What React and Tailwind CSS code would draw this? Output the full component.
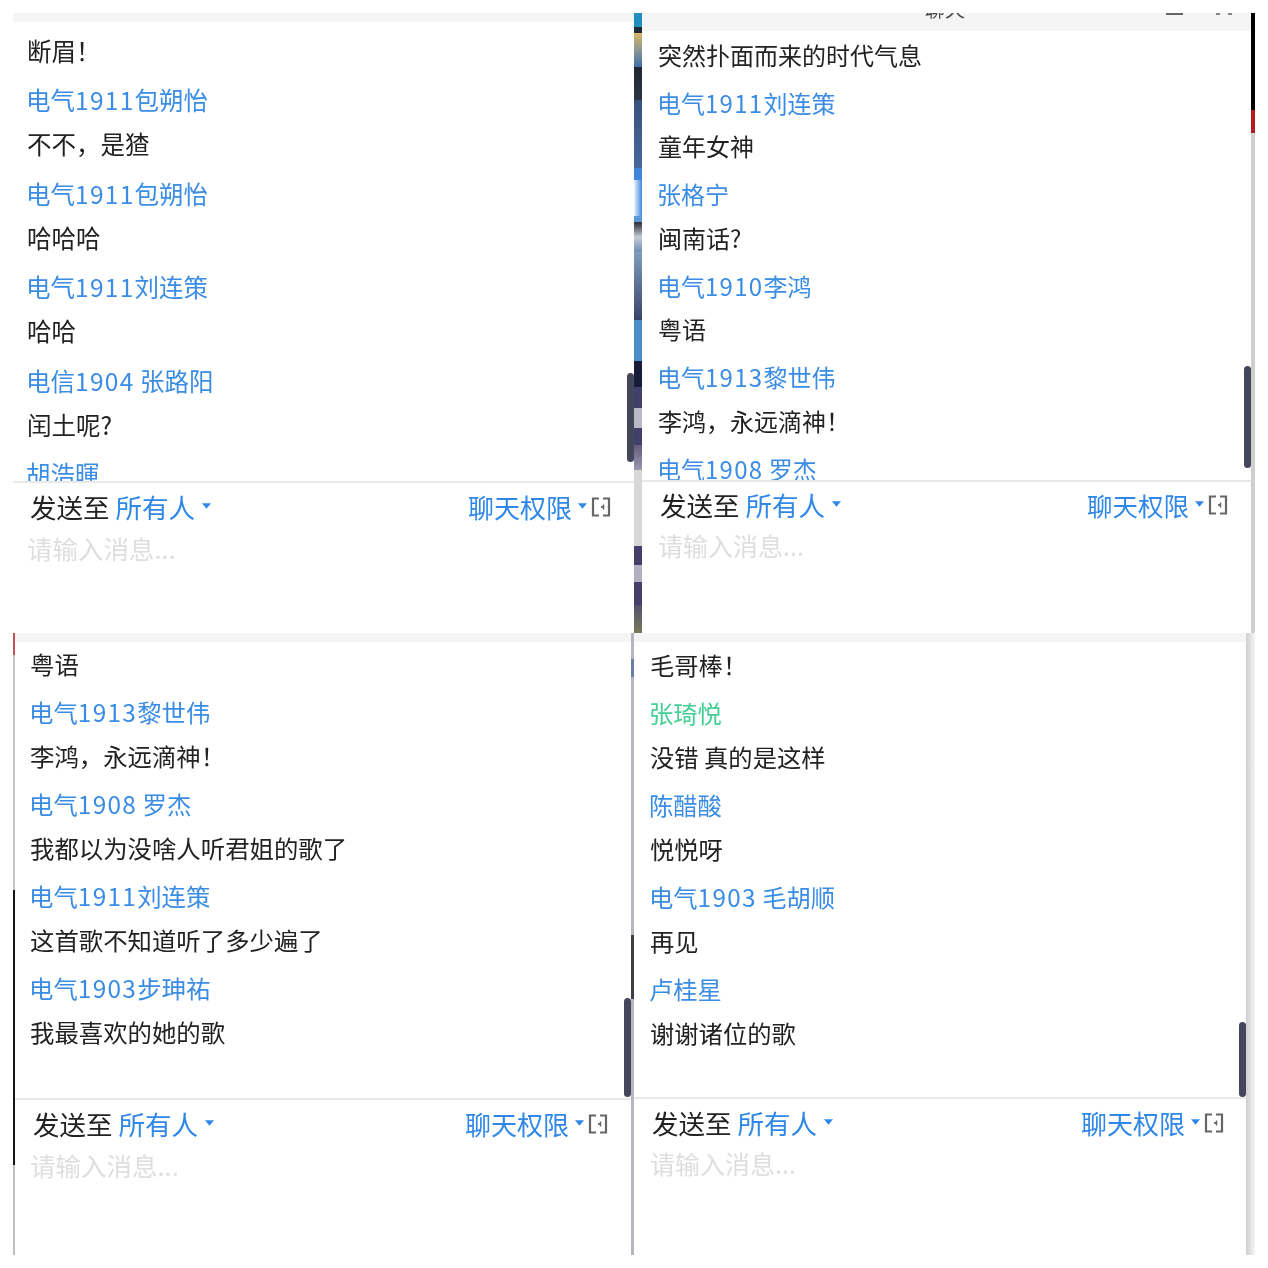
import React from "react";

const FONT = "font-['Microsoft_YaHei','Noto_Sans_CJK_SC',sans-serif]";

const strip2 = [
  "h-[14px] bg-[#1f8fc0]",
  "h-[6px] bg-[#23283a]",
  "h-[34px] bg-gradient-to-b from-[#d8b860] to-[#3d6ea8]",
  "h-[33px] bg-gradient-to-b from-[#20242e] to-[#2c3648]",
  "h-[68px] bg-gradient-to-b from-[#39527e] to-[#47689c]",
  "h-[12px] bg-[#3f86d8]",
  "h-[36px] bg-gradient-to-r from-[#eaf2fb] to-[#3f86d8]",
  "h-[6px] bg-[#5a98dc]",
  "h-[30px] bg-gradient-to-b from-[#2e3036] via-[#c8ccd4] to-[#6f8db4]",
  "h-[68px] bg-gradient-to-b from-[#7f9dc0] to-[#39456c]",
  "h-[41px] bg-[#4a8cc8]",
  "h-[26px] bg-[#171c3c]",
  "h-[21px] bg-[#40406a]",
  "h-[20px] bg-[#b8b8c8]",
  "h-[17px] bg-[#40406a]",
  "h-[25px] bg-gradient-to-b from-[#635c80] to-[#9c98ac]",
  "h-[76px] bg-[#d8d8d8]",
  "h-[19px] bg-[#44406a]",
  "h-[17px] bg-[#b0b0c0]",
  "h-[23px] bg-[#44406a]",
  "h-[28px] bg-gradient-to-b from-[#55506c] to-[#7a7a58]",
];

const strip3 = [
  "h-[22px] bg-[#c0505a]",
  "h-[235px] bg-[#c4c4c8]",
  "h-[275px] bg-[#161616]",
  "h-[90px] bg-[#c0c0c0]",
];

const strip3b = [
  "h-[26px] bg-[#b4b6c0]",
  "h-[18px] bg-[#6a7ca8]",
  "h-[258px] bg-[#b4b6c0]",
  "h-[64px] bg-[#3e3e44]",
  "h-[256px] bg-[#b4b6c0]",
];

const panels = [
  {
    head: "h-[9px]",
    list: "pt-[7px] pl-[14px] text-[24.5px]",
    rowH: "h-[44.25px]",
    nameGap: "mt-[5px]",
    row: "pl-[17px] pr-[23px] mt-[6px]",
    label: "text-[26px]",
    ph: "pl-[14px] mt-[8px] text-[25.5px]",
    footer: "h-[152px]",
    bar: "top-[360px] h-[89px]",
    items: [
      ["m", "断眉！"],
      ["n", "电气1911包朔怡"],
      ["m", "不不，是猹"],
      ["n", "电气1911包朔怡"],
      ["m", "哈哈哈"],
      ["n", "电气1911刘连策"],
      ["m", "哈哈"],
      ["n", "电信1904 张路阳"],
      ["m", "闰土呢?"],
      ["n", "胡浩暉"],
    ],
  },
  {
    head: "h-[18px]",
    list: "pt-[2px] pl-[16px] text-[24px]",
    rowH: "h-[43.25px]",
    nameGap: "mt-[5px]",
    row: "pl-[18px] pr-[23px] mt-[5px]",
    label: "text-[25.5px]",
    ph: "pl-[16px] mt-[7px] text-[25px]",
    footer: "h-[153px]",
    bar: "top-[353px] h-[102px]",
    title: true,
    items: [
      ["m", "突然扑面而来的时代气息"],
      ["n", "电气1911刘连策"],
      ["m", "童年女神"],
      ["n", "张格宁"],
      ["m", "闽南话?"],
      ["n", "电气1910李鸿"],
      ["m", "粤语"],
      ["n", "电气1913黎世伟"],
      ["m", "李鸿，永远滴神！"],
      ["n", "电气1908 罗杰"],
    ],
  },
  {
    head: "h-[9px]",
    list: "pl-[15px] text-[24.4px]",
    rowH: "h-[44px]",
    nameGap: "mt-[4px]",
    row: "pl-[18px] pr-[23px] mt-[6px]",
    label: "text-[26px]",
    ph: "pl-[15px] mt-[8px] text-[25.5px]",
    footer: "h-[157px]",
    bar: "top-[365px] h-[99px]",
    items: [
      ["m", "粤语"],
      ["n", "电气1913黎世伟"],
      ["m", "李鸿，永远滴神！"],
      ["n", "电气1908 罗杰"],
      ["m", "我都以为没啥人听君姐的歌了"],
      ["n", "电气1911刘连策"],
      ["m", "这首歌不知道听了多少遍了"],
      ["n", "电气1903步珅祐"],
      ["m", "我最喜欢的她的歌"],
    ],
  },
  {
    head: "h-[9px]",
    list: "pt-[1px] pl-[16px] text-[24.3px]",
    rowH: "h-[44px]",
    nameGap: "mt-[4px]",
    row: "pl-[18px] pr-[22px] mt-[6px]",
    label: "text-[26px]",
    ph: "pl-[16px] mt-[7px] text-[25px]",
    footer: "h-[158px]",
    bar: "top-[389px] h-[75px]",
    items: [
      ["m", "毛哥棒！"],
      ["g", "张琦悦"],
      ["m", "没错 真的是这样"],
      ["n", "陈醋酸"],
      ["m", "悦悦呀"],
      ["n", "电气1903 毛胡顺"],
      ["m", "再见"],
      ["n", "卢桂星"],
      ["m", "谢谢诸位的歌"],
    ],
  },
];

const Caret = () => (
  <svg width="9" height="6" viewBox="0 0 10 6" className="shrink-0 mb-[2px]">
    <path d="M0 0h10L5 6z" fill="#2f87e8" />
  </svg>
);

const ExitIcon = () => (
  <svg width="20" height="20" viewBox="0 0 20 20" fill="none" stroke="#666" strokeWidth="2.200" className="shrink-0">
    <path d="M8 1.500H2v17h6" />
    <path d="M12 1.500h6v17h-6" />
    <path d="M10 10h3" strokeWidth="1.800" />
    <path d="M12.500 7.500v5" strokeWidth="1.500" />
  </svg>
);

// digits in the names are wider than the font's, so they get a little tracking
const NameText = ({ text }) => (
  <span className="whitespace-pre">
    {text.split(/(\d+)/).map((part, i) =>
      /\d/.test(part) ? (
        <span key={i} className="tracking-[1.3px]">{part}</span>
      ) : (
        <span key={i}>{part}</span>
      )
    )}
  </span>
);

const Row = ({ kind, text, p }) => {
  if (kind === "m") {
    return <div className={`${p.rowH} text-[#222] shrink-0 flex items-center whitespace-nowrap`}>{text}</div>;
  }
  const color = kind === "g" ? "text-[#45cf94]" : "text-[#3a8ce4]";
  return (
    <div className={`${p.rowH} ${p.nameGap} ${color} -ml-[1px] shrink-0 flex items-center whitespace-nowrap`}>
      <NameText text={text} />
    </div>
  );
};

const Panel = ({ p }) => (
  <div className="relative flex-1 min-w-0 h-full flex flex-col bg-white overflow-hidden">
    <div className={`${p.head} shrink-0 bg-[#f5f5f5] flex items-start overflow-hidden`}>
      {p.title && (
        <>
          <span className="ml-[283px] -mt-[14px] text-[20px] leading-[20px] text-[#444]">聊天</span>
          <span className="ml-auto w-[17px] h-[2px] bg-[#666]"></span>
          <span className="ml-[33px] w-[4px] h-[2px] bg-[#888]"></span>
          <span className="ml-[8px] mr-[19px] w-[4px] h-[2px] bg-[#888]"></span>
        </>
      )}
    </div>
    <div className={`${p.list} flex-1 min-h-0 flex flex-col overflow-hidden`}>
      {p.items.map(([kind, text], i) => (
        <Row key={i} kind={kind} text={text} p={p} />
      ))}
    </div>
    <div className={`${p.footer} shrink-0 border-t-2 border-[#e8e8e8]`}>
      <div className={`${p.row} flex items-center h-[36px]`}>
        <span className="text-[26.5px] leading-[36px] text-[#222]">发送至</span>
        <span className="ml-[6px] text-[26.5px] leading-[36px] text-[#2f87e8]">所有人</span>
        <span className="ml-[7px] flex items-center"><Caret /></span>
        <span className={`${p.label} ml-auto leading-[36px] text-[#2f87e8]`}>聊天权限</span>
        <span className="ml-[6px] flex items-center"><Caret /></span>
        <span className="ml-[4px] flex items-center"><ExitIcon /></span>
      </div>
      <div className={`${p.ph} h-[30px] leading-[30px] text-[#dedede]`}>请输入消息...</div>
    </div>
    <div className={`${p.bar} absolute right-0 w-[7px] rounded-[4px] bg-[#44465a]`}></div>
  </div>
);

const Strip = ({ items, width }) => (
  <div className={`${width} shrink-0 h-full flex flex-col overflow-hidden`}>
    {items.map((c, i) => (
      <div key={i} className={`${c} shrink-0`}></div>
    ))}
  </div>
);

export default function App() {
  return (
    <div className={`${FONT} w-[1268px] h-[1268px] bg-white pt-[13px] pl-[13px] blur-[0.4px]`}>
      <div className="grid grid-cols-[621px_621px] grid-rows-[620px_622px]">
        <div className="flex h-[620px]">
          <Panel p={panels[0]} />
        </div>
        <div className="flex h-[620px]">
          <Strip items={strip2} width="w-[8px]" />
          <Panel p={panels[1]} />
          <Strip items={["h-[97px] bg-black", "h-[23px] bg-[#b81a1a]", "h-[500px] bg-[#cfcfcf]"]} width="w-[4px]" />
        </div>
        <div className="flex h-[622px]">
          <Strip items={strip3} width="w-[2px]" />
          <Panel p={panels[2]} />
          <Strip items={strip3b} width="w-[3px]" />
        </div>
        <div className="flex h-[622px]">
          <Panel p={panels[3]} />
          <div className="w-[9px] shrink-0 h-full bg-gradient-to-r from-[#cfcfcf] to-[#f4f4f4]"></div>
        </div>
      </div>
    </div>
  );
}
